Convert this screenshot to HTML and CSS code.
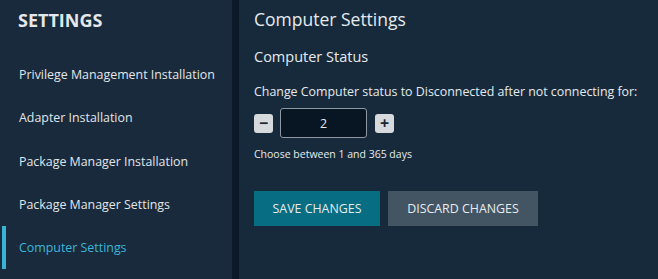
FILE: index.html
```html
<!DOCTYPE html>
<html>
<head>
<meta charset="utf-8">
<title>Settings</title>
<link rel="stylesheet" href="styles.css">
</head>
<body>
<div id="wrapper">
  <div class="sideNav">
    <h1>SETTINGS</h1>
    <ul class="navList">
      <li>Privilege Management Installation</li>
      <li>Adapter Installation</li>
      <li>Package Manager Installation</li>
      <li>Package Manager Settings</li>
      <li class="active">Computer Settings</li>
    </ul>
  </div>
  <div class="content">
    <h2>Computer Settings</h2>
    <h3>Computer Status</h3>
    <p class="desc">Change Computer status to Disconnected after not connecting for:</p>
    <div class="stepper">
      <button type="button" class="stepBtn">&minus;</button>
      <input type="text" class="stepVal" value="2">
      <button type="button" class="stepBtn">+</button>
    </div>
    <p class="hint">Choose between 1 and 365 days</p>
    <div class="btn-group">
      <button type="button" class="btn btnSave">SAVE CHANGES</button>
      <button type="button" class="btn btnDiscard">DISCARD CHANGES</button>
    </div>
  </div>
</div>
</body>
</html>
```

FILE: styles.css
```css
html,body {
  width: 100%;
  height: 100%;
  margin: 0px;
  padding: 0px;
  font-family: "Open Sans", "Noto Sans", sans-serif;
  color: #e6eaee;
  background: #162a3c;
  overflow: hidden;
}
#wrapper {
  display: flex;
  width: 100%;
  height: 100%;
}
.sideNav {
  width: 232px;
  flex-shrink: 0;
  background: #182a3b;
  border-right: 7px solid #0c1a28;
}
.sideNav h1 {
  margin: 0px;
  padding: 8px 0 0 18px;
  font-size: 18px;
  font-weight: 700;
  line-height: 24px;
  color: #e4e8ec;
}
.navList {
  list-style: none;
  margin: 0px;
  padding: 21px 0 0 0;
}
.navList li {
  height: 43.3px;
  line-height: 43px;
  font-size: 12.4px;
  color: #e2e6ea;
  border-left: 4px solid transparent;
  margin-left: 2px;
  padding-left: 13px;
}
.navList li.active {
  color: #3cb6da;
  border-left-color: #3ab2d4;
}
.content {
  flex: 1;
  padding: 6px 0 0 15px;
}
h2 {
  margin: 0px;
  font-size: 17.5px;
  font-weight: 400;
  line-height: 26px;
}
h3 {
  margin: 15px 0 0 0;
  font-size: 14.5px;
  font-weight: 400;
  line-height: 20px;
}
.desc {
  margin: 16px 0 0 0;
  font-size: 12.4px;
  line-height: 18px;
}
.stepper {
  display: flex;
  align-items: center;
  margin-top: 7px;
}
.stepBtn {
  width: 19px;
  height: 19px;
  padding: 0px;
  border: none;
  border-radius: 3px;
  background: #d6dadd;
  color: #1a2632;
  font-family: inherit;
  font-size: 16px;
  font-weight: 700;
  line-height: 19px;
}
.stepVal {
  width: 87px;
  height: 30px;
  box-sizing: border-box;
  margin: 0 8px 0 7px;
  border: 1px solid #8d98a3;
  border-radius: 3px;
  background: #081624;
  color: #e6eaee;
  text-align: center;
  font-family: inherit;
  font-size: 12.4px;
}
input:focus,button:focus {
  outline: none;
}
.hint {
  margin: 8px 0 0 0;
  font-size: 10.5px;
  line-height: 16px;
}
.btn-group {
  display: flex;
  gap: 8px;
  margin-top: 29px;
}
.btn {
  height: 35px;
  padding: 0px;
  border: none;
  white-space: nowrap;
  font-family: inherit;
  font-size: 12.4px;
  color: #e8ecef;
}
.btnSave {
  width: 126px;
  background: #066d83;
}
.btnDiscard {
  width: 150px;
  background: #435563;
}
```
